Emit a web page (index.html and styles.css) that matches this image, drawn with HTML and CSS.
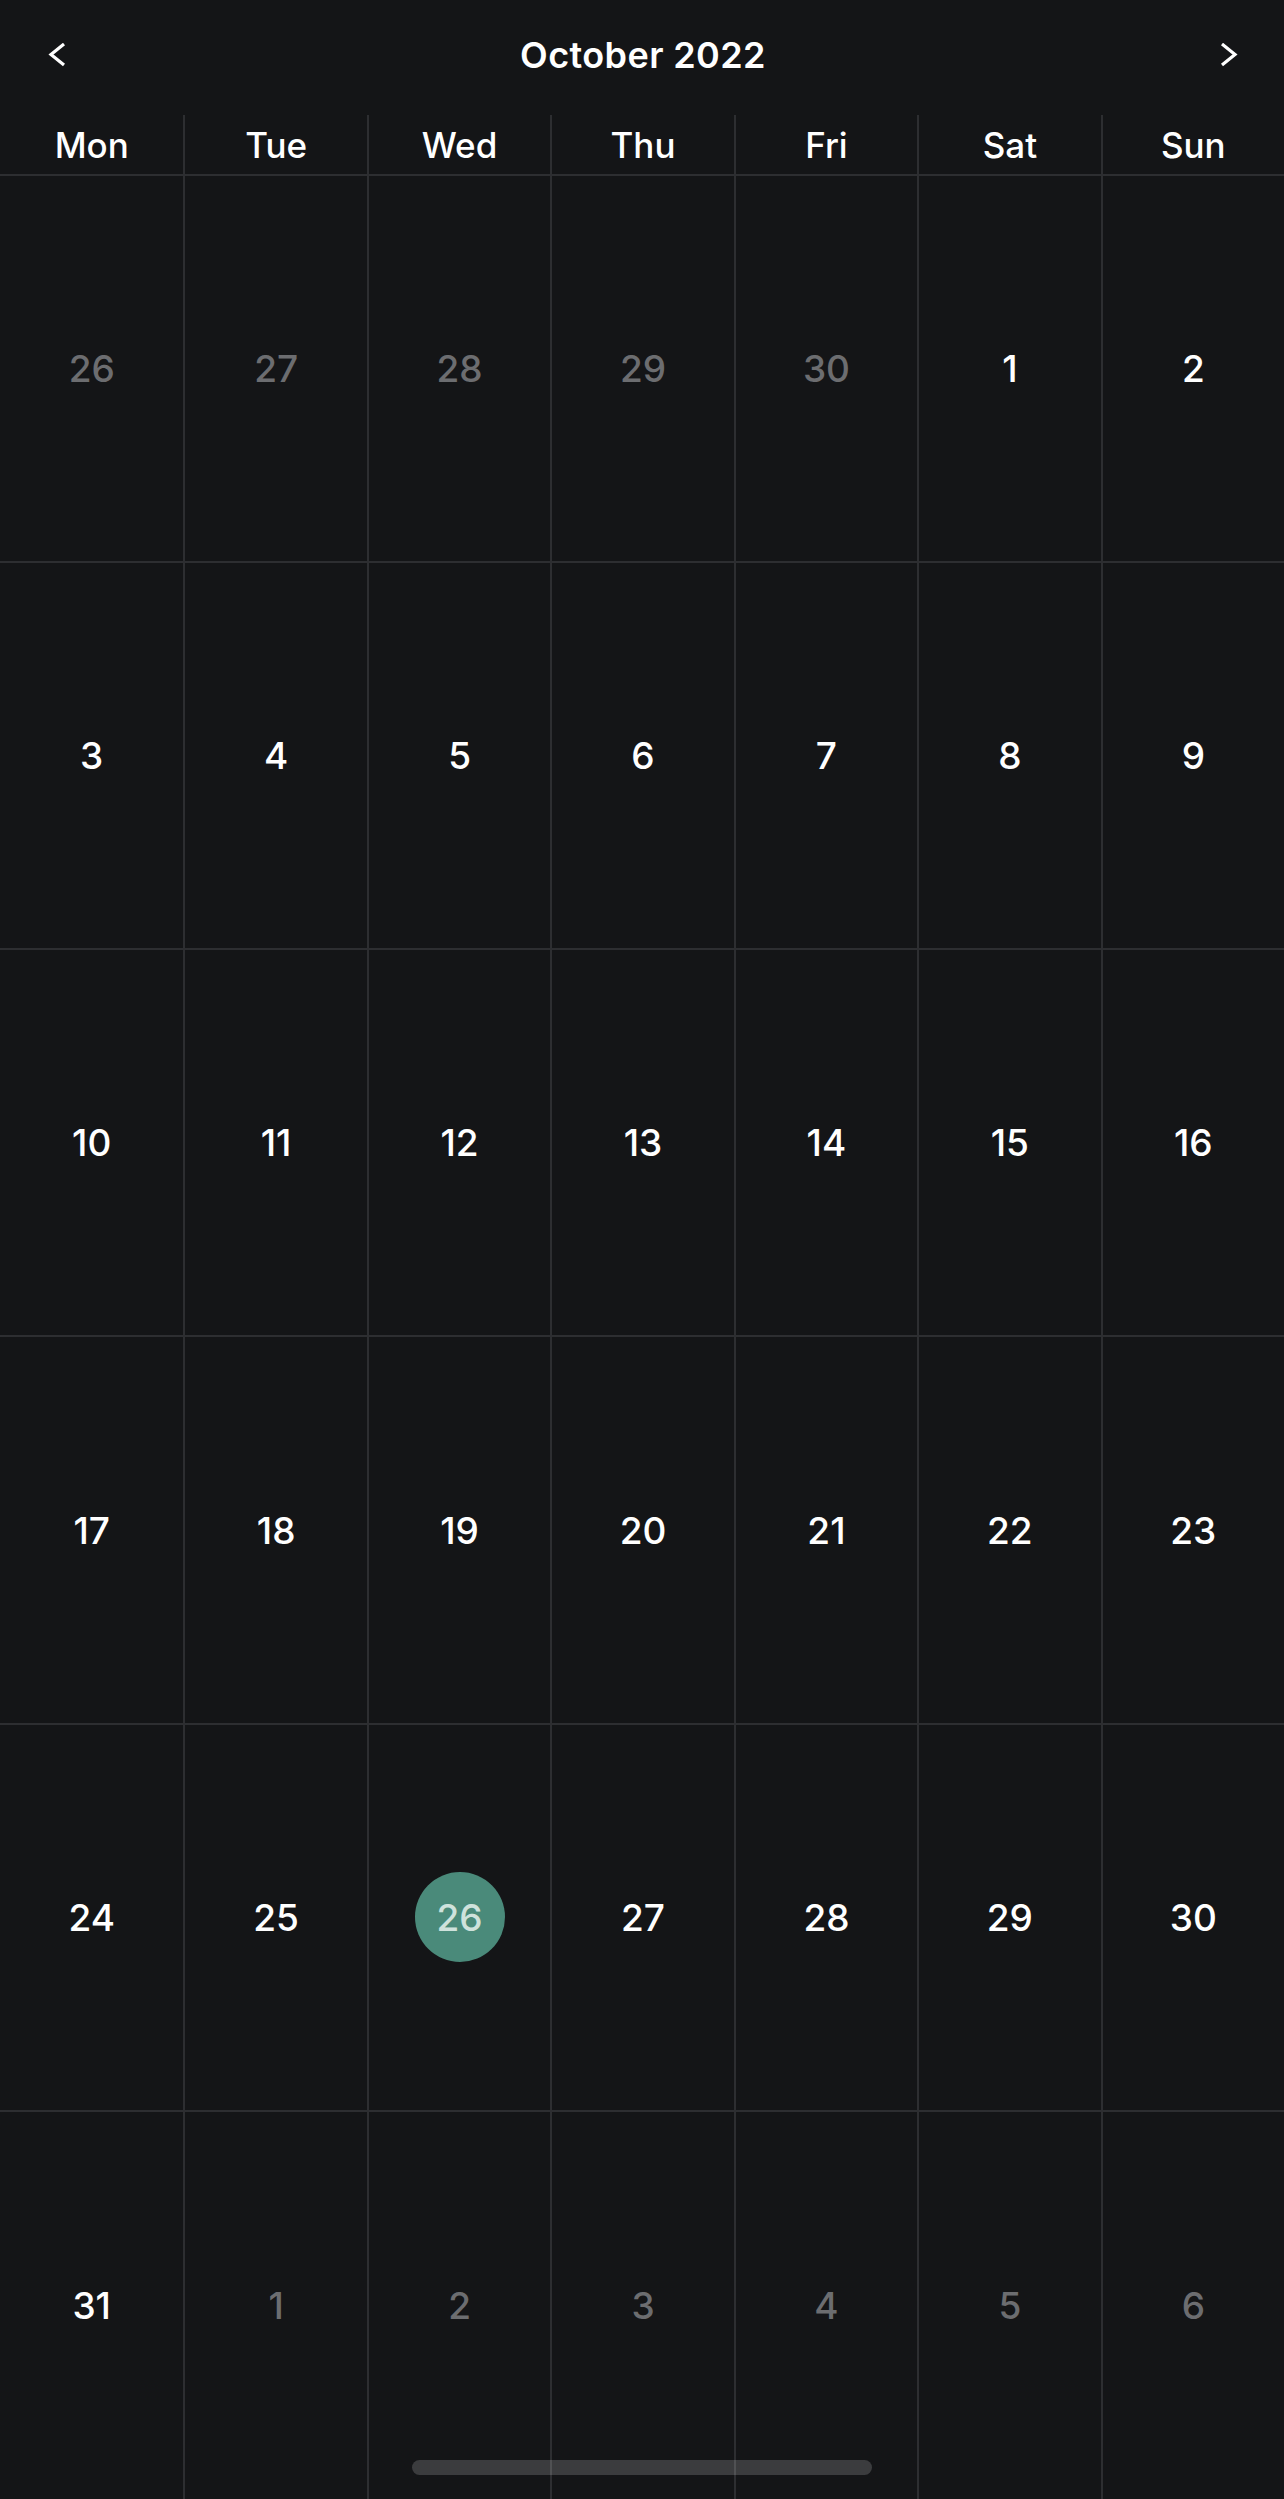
FILE: index.html
```html
<!DOCTYPE html>
<html lang="en">
<head>
  <meta charset="UTF-8" />
  <meta name="viewport" content="width=device-width, initial-scale=1.0" />
  <title>Calendar</title>
  <link rel="stylesheet" href="styles.css">
</head>
<body>
  <!-- Month header -->
  <div class="month-bar">
    <button class="nav-btn" aria-label="Previous month">
      <svg width="24" height="24" viewBox="0 0 24 24"><path d="M18 1 L5 11.5 L18 22" fill="none" stroke="#fff" stroke-width="3.2"/></svg>
    </button>
    <h1 class="month-title">October 2022</h1>
    <button class="nav-btn" aria-label="Next month">
      <svg width="24" height="24" viewBox="0 0 24 24"><path d="M6 1 L19 11.5 L6 22" fill="none" stroke="#fff" stroke-width="3.2"/></svg>
    </button>
  </div>

  <!-- Calendar grid -->
  <div class="cal-grid" id="cal-grid"></div>

  <div class="home-indicator"></div>

  <script>
    const weekdays = ["Mon", "Tue", "Wed", "Thu", "Fri", "Sat", "Sun"];
    const grid = document.getElementById("cal-grid");
    const today = 26;

    weekdays.forEach((d, i) => {
      const div = document.createElement("div");
      div.className = "cell weekday" + (i === 0 ? " first" : "");
      div.textContent = d;
      grid.appendChild(div);
    });

    // October 2022 starts on a Saturday
    const days = [];
    [26, 27, 28, 29, 30].forEach(n => days.push({n, muted: true}));
    for (let n = 1; n <= 31; n++) days.push({n, muted: false});
    [1, 2, 3, 4, 5, 6].forEach(n => days.push({n, muted: true}));

    days.forEach((d, i) => {
      const div = document.createElement("div");
      div.className = "cell day" + (i % 7 === 0 ? " first" : "") + (i >= 35 ? " last-row" : "");
      let cls = "num";
      if (d.muted) cls += " muted";
      if (!d.muted && d.n === today) cls += " today";
      div.innerHTML = `<span class="${cls}">${d.n}</span>`;
      grid.appendChild(div);
    });
  </script>
</body>
</html>
```

FILE: styles.css
```css
* { box-sizing: border-box; }
html, body { margin: 0; padding: 0; }
body { font-family: 'Inter', 'Noto Sans', sans-serif; background: #141517; color: #fff; height: 2499px; overflow: hidden; position: relative; }

.month-bar { height: 115px; display: flex; align-items: center; justify-content: space-between; padding: 0 44px 5px 46px; }
.month-title { margin: 0; font-size: 36px; font-weight: 600; letter-spacing: 0.4px; }
.nav-btn { background: none; border: none; padding: 0; width: 24px; height: 24px; display: flex; cursor: pointer; }

.cal-grid { display: grid; grid-template-columns: repeat(7, 1fr); grid-template-rows: 61px repeat(6, 1fr); height: 2384px; }
.cell { border-left: 2px solid #2d2e31; border-bottom: 2px solid #2d2e31; display: flex; align-items: center; justify-content: center; }
.cell.first { border-left: none; }
.cell.last-row { border-bottom: none; }
.weekday { font-size: 35px; font-weight: 500; padding-top: 1px; }

.num { font-size: 37px; font-weight: 500; width: 90px; height: 90px; border-radius: 50%; display: flex; align-items: center; justify-content: center; }
.num.muted { color: #6c6d70; }
.num.today { background: #4a8a7a; color: #cfe2dc; }

.home-indicator { position: absolute; left: 50%; bottom: 24px; width: 460px; height: 15px; margin-left: -230px; border-radius: 8px; background: rgba(255,255,255,0.17); }
```
